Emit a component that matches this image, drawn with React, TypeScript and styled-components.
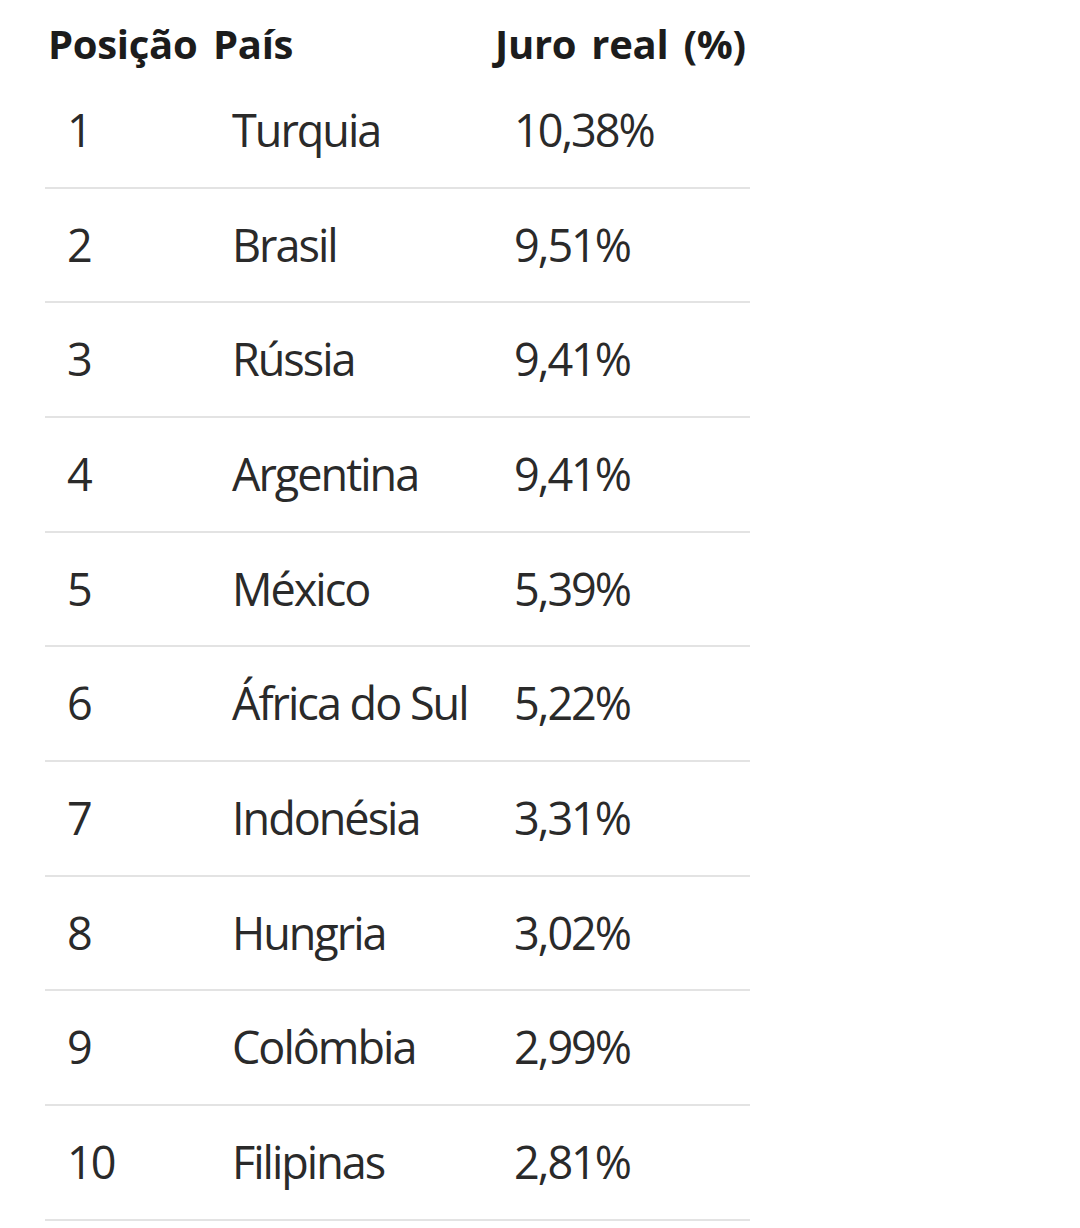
import React from 'react';
import styled, {createGlobalStyle} from 'styled-components';

type Row = {pos: string; country: string; rate: string};

const rows: Row[] = [
  {pos: '1', country: 'Turquia', rate: '10,38%'},
  {pos: '2', country: 'Brasil', rate: '9,51%'},
  {pos: '3', country: 'Rússia', rate: '9,41%'},
  {pos: '4', country: 'Argentina', rate: '9,41%'},
  {pos: '5', country: 'México', rate: '5,39%'},
  {pos: '6', country: 'África do Sul', rate: '5,22%'},
  {pos: '7', country: 'Indonésia', rate: '3,31%'},
  {pos: '8', country: 'Hungria', rate: '3,02%'},
  {pos: '9', country: 'Colômbia', rate: '2,99%'},
  {pos: '10', country: 'Filipinas', rate: '2,81%'},
];

function App() {
  return (
    <Page>
      <GlobalStyle />
      <Table>
        <HeadRow>
          <HeadCell>Posição</HeadCell>
          <HeadCell>País</HeadCell>
          <HeadCell>Juro real (%)</HeadCell>
        </HeadRow>
        {rows.map(r => (
          <BodyRow key={r.pos}>
            <Cell>{r.pos}</Cell>
            <Cell>{r.country}</Cell>
            <Cell>{r.rate}</Cell>
          </BodyRow>
        ))}
      </Table>
    </Page>
  );
}

const GlobalStyle = createGlobalStyle`
  * {
    box-sizing: border-box;
  }
  body {
    margin: 0;
    background: #fff;
    font-family: 'Open Sans', 'Noto Sans', sans-serif;
    color: #222;
  }
`

const Page = styled.div`
  width: 1080px;
  height: 1228px;
  background: #fff;
  padding-left: 45px;
`

const Table = styled.div`
  width: 705px;
  display: flex;
  flex-flow: column;
`

const HeadRow = styled.div`
  display: grid;
  grid-template-columns: 165px 282px 258px;
  height: 74px;
  padding-top: 16px;
`

const HeadCell = styled.div`
  padding-left: 3px;
  font-size: 40px;
  font-weight: 700;
  line-height: 55px;
  color: #1c1c1c;
  white-space: nowrap;
  letter-spacing: -0.3px;
  word-spacing: 5px;
`

const BodyRow = styled.div`
  display: grid;
  grid-template-columns: 165px 282px 258px;
  height: 114.66px;
  padding-top: 25px;
  border-bottom: 2px solid #e3e3e3;
`

const Cell = styled.div`
  padding-left: 22px;
  font-size: 45px;
  letter-spacing: -2px;
  line-height: 61px;
  color: #2a2a2a;
  white-space: nowrap;
`

export default App;
